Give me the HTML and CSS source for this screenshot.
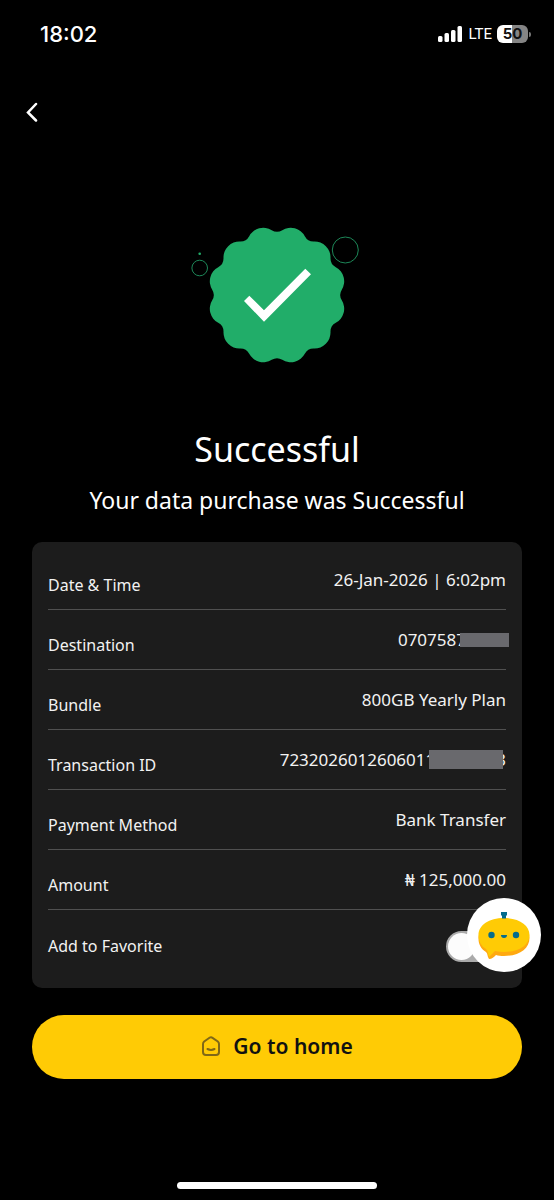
FILE: index.html
```html
<!DOCTYPE html>
<html lang="en">
<head>
<meta charset="utf-8">
<meta name="viewport" content="width=device-width, initial-scale=1">
<title>Successful</title>
<link rel="stylesheet" href="styles.css">
</head>
<body>
<div class="screen">
  <header class="status">
    <time class="clock">18:02</time>
    <div class="indicators">
      <svg class="signal" viewBox="0 0 25 16" aria-hidden="true">
        <rect x="0" y="10" width="4.500" height="6" rx="1.500"/>
        <rect x="6.500" y="7" width="4.500" height="9" rx="1.500"/>
        <rect x="13" y="4" width="4.500" height="12" rx="1.500"/>
        <rect x="19.500" y="0" width="4.500" height="16" rx="1.500"/>
      </svg>
      <span class="network">LTE</span>
      <span class="battery">50</span>
    </div>
  </header>
  <nav class="nav">
    <button class="back" type="button" aria-label="Back">
      <svg viewBox="0 0 12 20" aria-hidden="true"><path d="M10 2 2 10.500 10 18.500"/></svg>
    </button>
  </nav>
  <main class="content">
    <svg class="badge" viewBox="-95 -80 190 160" aria-hidden="true">
      <path class="seal" d="M5.300-64.800A16 16 0 0 1 27.800-58.800A10 10 0 0 0 37-53.500A16 16 0 0 1 53.500-37A10 10 0 0 0 58.800-27.800A16 16 0 0 1 64.800-5.300A10 10 0 0 0 64.800 5.300A16 16 0 0 1 58.800 27.800A10 10 0 0 0 53.500 37A16 16 0 0 1 37 53.500A10 10 0 0 0 27.800 58.800A16 16 0 0 1 5.300 64.800A10 10 0 0 0-5.300 64.800A16 16 0 0 1-27.800 58.800A10 10 0 0 0-37 53.500A16 16 0 0 1-53.500 37A10 10 0 0 0-58.800 27.800A16 16 0 0 1-64.800 5.300A10 10 0 0 0-64.800-5.300A16 16 0 0 1-58.800-27.800A10 10 0 0 0-53.500-37A16 16 0 0 1-37-53.500A10 10 0 0 0-27.800-58.800A16 16 0 0 1-5.300-64.800A10 10 0 0 0 5.300-64.800Z"/>
      <path class="tick" d="M-33 6-27.700.7-13 15.300 28.300-26.300 34-20.700-13 26.700Z"/>
      <circle class="ring" cx="68.300" cy="-45" r="13"/>
      <circle class="ring" cx="-77.300" cy="-27" r="7.800"/>
      <circle class="seal" cx="-77.300" cy="-41.300" r="1.300"/>
    </svg>
    <h1 class="title">Successful</h1>
    <p class="message">Your data purchase was Successful</p>
    <section class="card">
      <dl class="details">
        <div class="row"><dt>Date &amp; Time</dt><dd>26-Jan-2026 | 6:02pm</dd></div>
        <div class="row"><dt>Destination</dt><dd class="overhang">0707587<span class="mask"></span></dd></div>
        <div class="row"><dt>Bundle</dt><dd>800GB Yearly Plan</dd></div>
        <div class="row"><dt>Transaction ID</dt><dd>7232026012606011<span class="mask mask-large"></span>3</dd></div>
        <div class="row"><dt>Payment Method</dt><dd>Bank Transfer</dd></div>
        <div class="row"><dt>Amount</dt><dd>₦ 125,000.00</dd></div>
      </dl>
      <div class="row favorite">
        <label for="favorite">Add to Favorite</label>
        <input class="toggle" id="favorite" type="checkbox" role="switch">
      </div>
      <button class="bot" type="button" aria-label="Open chat assistant">
        <svg viewBox="0 0 74 74" aria-hidden="true">
          <path class="bot-shade" d="M11.500 41C11.500 30 22 21 37 21s25.500 8 25.500 19S52 58 37 58c-3 0-6-.3-8-1-2 2-4 4-7 4-2-3-1-5-3-7-5-3-7.500-8-7.500-13Z"/>
          <path class="bot-face" d="M11.500 37C11.500 27 22 20 37 20s25.500 7 25.500 17S52 54 37 54c-3 0-6-.3-9-1l-6 6c-1-3-1-6-3-8-5-3-7.500-8-7.500-14Z"/>
          <path class="bot-ink" d="M34 14h6v3l-1 1v2.500h-4V18l-1-1Z"/>
          <circle class="bot-ink" cx="24.500" cy="37" r="3.200"/>
          <circle class="bot-ink" cx="49" cy="37" r="3.200"/>
          <path class="bot-ink" d="M34 37h6q0 3-3 3t-3-3Z"/>
        </svg>
      </button>
    </section>
    <button class="home" type="button">
      <svg viewBox="0 0 20 20" aria-hidden="true">
        <path d="M2 8Q2 6.500 3.200 5.500L8.500 1.800q1.500-1 3 0L16.800 5.500Q18 6.500 18 8V16q0 3-3 3H5q-3 0-3-3ZM6.500 13q3.500 1.800 7 0"/>
      </svg>
      <span>Go to home</span>
    </button>
  </main>
  <div class="indicator"></div>
</div>
</body>
</html>
```
FILE: styles.css
```css
* {
  box-sizing: border-box;
}

body {
  margin: 0;
  background: #000;
  color: #fff;
  font-family: "Noto Sans", "Open Sans", sans-serif;
}

button {
  border: 0;
  font: inherit;
  cursor: pointer;
}

.screen {
  display: flex;
  flex-direction: column;
  min-height: 100vh;
  padding-bottom: 11px;
}

.status {
  display: flex;
  align-items: center;
  justify-content: space-between;
  height: 67px;
  padding: 0 26px 0 40px;
  font-family: Inter, sans-serif;
}

.clock {
  font-size: 22px;
  font-weight: 500;
}

.indicators {
  display: flex;
  align-items: center;
  gap: 5px;
}

.signal {
  width: 25px;
  height: 16px;
  fill: #fff;
}

.network {
  font-family: Roboto, sans-serif;
  font-size: 15px;
}

.battery {
  position: relative;
  width: 31px;
  border-radius: 6px;
  background: linear-gradient(90deg, #fff 50%, #858585 50%);
  color: #111;
  font-size: 15px;
  font-weight: 700;
  line-height: 18px;
  text-align: center;
}

.battery::after {
  content: "";
  position: absolute;
  top: 7px;
  right: -3px;
  width: 2px;
  height: 5px;
  border-radius: 0 2px 2px 0;
  background: #777;
}

.nav {
  padding: 25px 16px 24px;
}

.back {
  display: grid;
  place-items: center;
  width: 32px;
  height: 40px;
  padding: 0;
  background: none;
}

.back svg {
  width: 12px;
  height: 20px;
  fill: none;
  stroke: #fff;
  stroke-width: 2.5;
  stroke-linecap: round;
}

.content {
  display: flex;
  flex-direction: column;
  padding: 59px 32px 24px;
}

.badge {
  align-self: center;
  width: 190px;
  height: 160px;
}

.seal {
  fill: #21ad69;
}

.tick {
  fill: #fff;
}

.ring {
  fill: none;
  stroke: #1d8758;
  stroke-width: 1;
}

.title {
  margin: 54px 0 0;
  font-size: 34px;
  font-weight: 400;
  line-height: 40px;
  text-align: center;
}

.message {
  margin: 15px 0 0;
  font-size: 23px;
  line-height: 32px;
  text-align: center;
}

.card {
  position: relative;
  margin-top: 26px;
  padding: 8px 16px;
  border-radius: 10px;
  background: #1c1c1c;
  color: #f2f2f2;
  font-size: 17px;
}

.details {
  margin: 0;
}

.row {
  display: flex;
  align-items: center;
  justify-content: space-between;
  height: 60px;
  border-bottom: 1px solid #505050;
}

.row dt,
.row label {
  padding-top: 10px;
  font-size: 16px;
}

.row dd {
  display: flex;
  align-items: center;
  margin: 0;
}

.row .overhang {
  margin-right: -3px;
}

.mask {
  width: 49px;
  height: 14px;
  margin-left: -6px;
  background: #69696d;
  z-index: 1;
}

.mask-large {
  width: 74px;
  height: 19px;
  margin-right: -7px;
}

.favorite {
  height: 70px;
  padding-bottom: 8px;
  border: 0;
}

.toggle {
  appearance: none;
  display: flex;
  width: 60px;
  height: 31px;
  margin: 10px 0 0;
  border: 2px solid #aaa;
  border-radius: 16px;
  background: #aaa;
}

.toggle::before {
  content: "";
  width: 27px;
  height: 27px;
  border-radius: 50%;
  background: #fcfcfc;
}

.bot {
  position: absolute;
  right: -19px;
  bottom: 16px;
  width: 74px;
  height: 74px;
  padding: 0;
  border-radius: 50%;
  background: #fff;
}

.bot svg {
  display: block;
  width: 74px;
  height: 74px;
}

.bot-face {
  fill: #ffcb05;
}

.bot-shade {
  fill: #ffa910;
}

.bot-ink {
  fill: #056c8c;
}

.home {
  display: flex;
  align-items: center;
  justify-content: center;
  gap: 12px;
  height: 64px;
  margin-top: 27px;
  padding: 0 0 2px;
  border-radius: 32px;
  background: #ffcb05;
  color: #111;
  font-size: 21px;
  font-weight: 600;
}

.home svg {
  width: 20px;
  height: 20px;
  fill: none;
  stroke: #806817;
  stroke-width: 2;
  stroke-linecap: round;
}

.indicator {
  align-self: center;
  width: 36%;
  height: 7px;
  margin-top: auto;
  border-radius: 4px;
  background: #fff;
}
```
